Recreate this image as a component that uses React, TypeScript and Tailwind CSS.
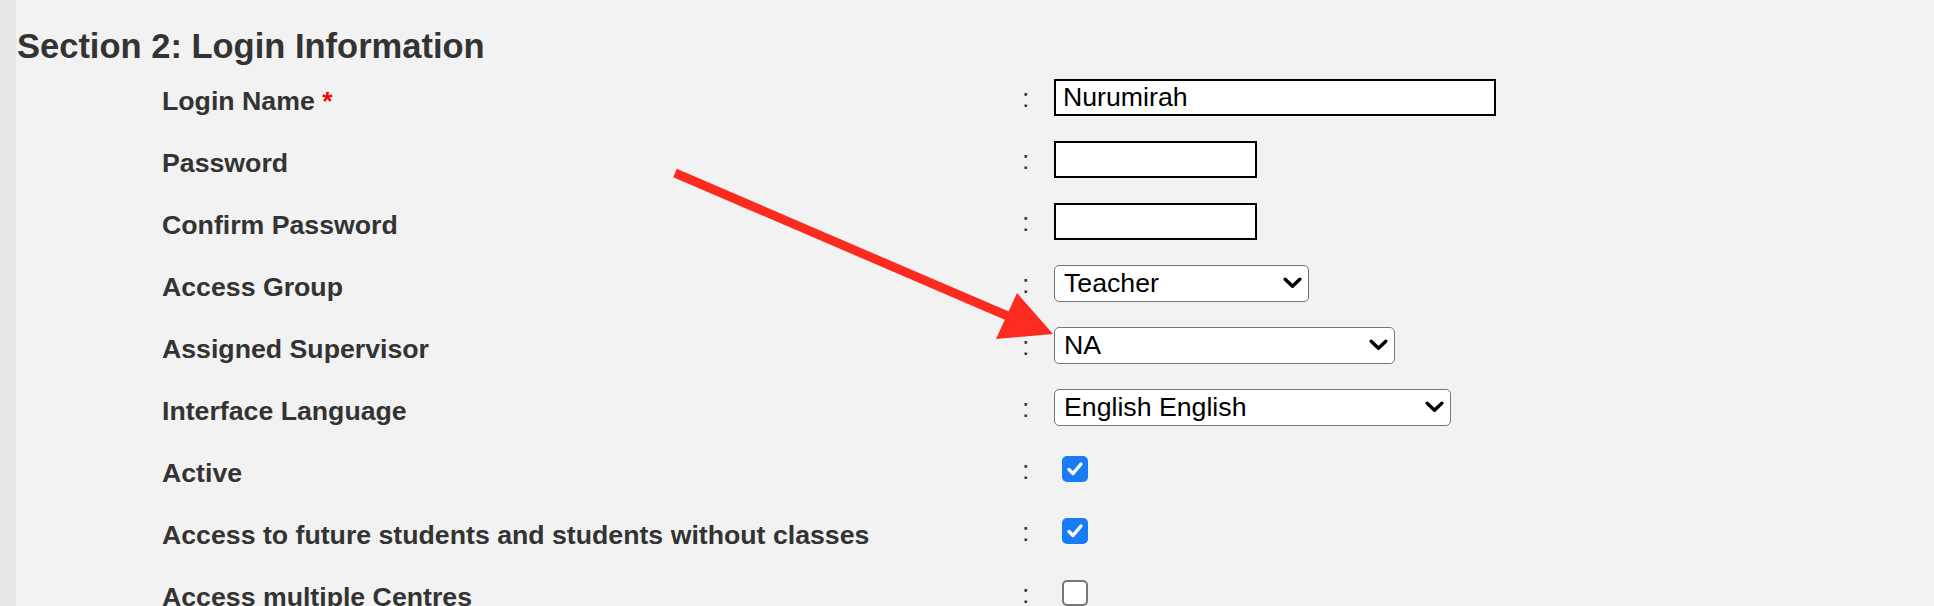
import React from 'react';

type Row =
  | { label: string; required?: boolean; kind: 'text'; value: string; width: number }
  | { label: string; kind: 'select'; value: string; width: number }
  | { label: string; kind: 'check'; checked: boolean };

const rows: Row[] = [
  { label: 'Login Name', required: true, kind: 'text', value: 'Nurumirah', width: 442 },
  { label: 'Password', kind: 'text', value: '', width: 203 },
  { label: 'Confirm Password', kind: 'text', value: '', width: 203 },
  { label: 'Access Group', kind: 'select', value: 'Teacher', width: 255 },
  { label: 'Assigned Supervisor', kind: 'select', value: 'NA', width: 341 },
  { label: 'Interface Language', kind: 'select', value: 'English English', width: 397 },
  { label: 'Active', kind: 'check', checked: true },
  { label: 'Access to future students and students without classes', kind: 'check', checked: true },
  { label: 'Access multiple Centres', kind: 'check', checked: false },
];

function Chevron() {
  return (
    <svg width="19" height="12" viewBox="0 0 19 12" className="shrink-0">
      <path d="M2.2 2.2 L9.5 9.3 L16.8 2.2" fill="none" stroke="#000" strokeWidth="3.4" strokeLinecap="round" strokeLinejoin="round" />
    </svg>
  );
}

function Control({ row }: { row: Row }) {
  if (row.kind === 'text') {
    return (
      <div
        className="flex h-[37px] items-center border-2 border-black bg-white pl-[7px] text-[26.7px] text-black"
        style={{ width: row.width }}
      >
        {row.value}
      </div>
    );
  }
  if (row.kind === 'select') {
    return (
      <div
        className="flex h-[37px] items-center justify-between rounded-[5px] border-[1.5px] border-[#767676] bg-white pl-[9px] pr-[6px] text-[26.7px] text-black"
        style={{ width: row.width }}
      >
        <span>{row.value}</span>
        <Chevron />
      </div>
    );
  }
  return (
    <div className="pl-[8px]">
      {row.checked ? (
        <div className="flex h-[26px] w-[26px] items-center justify-center rounded-[5px] bg-[#1a7cf5]">
          <svg width="18" height="16" viewBox="0 0 18 16">
            <path d="M3 8.5 L7 12.5 L15 3" fill="none" stroke="#fff" strokeWidth="3.4" strokeLinecap="round" strokeLinejoin="round" />
          </svg>
        </div>
      ) : (
        <div className="h-[26px] w-[26px] rounded-[5px] border-2 border-[#767676] bg-white" />
      )}
    </div>
  );
}

export default function App() {
  return (
    <div className="relative flex h-[606px] w-[1934px] overflow-hidden bg-[#f2f2f2] font-['Liberation_Sans',Arial,sans-serif] text-[#333]">
      <div className="w-[16px] shrink-0 bg-[#e6e6e6]" />
      <div className="flex-1 pl-px">
        <h2 className="h-[66px] pt-[26px] text-[34.5px] font-bold leading-[40px]">Section 2: Login Information</h2>
        <div className="pl-[145px]">
          {rows.map((r) => (
            <div key={r.label} className="flex h-[62px] items-center">
              <div className="w-[860px] shrink-0 pt-[8px] text-[26.7px] font-bold">
                {r.label}
                {'required' in r && r.required && <span className="text-[#f00]"> *</span>}
              </div>
              <div className="w-[32px] shrink-0 pt-[3px] text-[26.7px] text-[#333]">:</div>
              <Control row={r} />
            </div>
          ))}
        </div>
      </div>
      <svg className="pointer-events-none absolute left-0 top-0" width="1934" height="606" viewBox="0 0 1934 606">
        <line x1="675" y1="173" x2="1010" y2="317" stroke="#fb2b1f" strokeWidth="9" />
        <polygon points="996,339 1017,293 1053,334" fill="#fb2b1f" />
      </svg>
    </div>
  );
}
